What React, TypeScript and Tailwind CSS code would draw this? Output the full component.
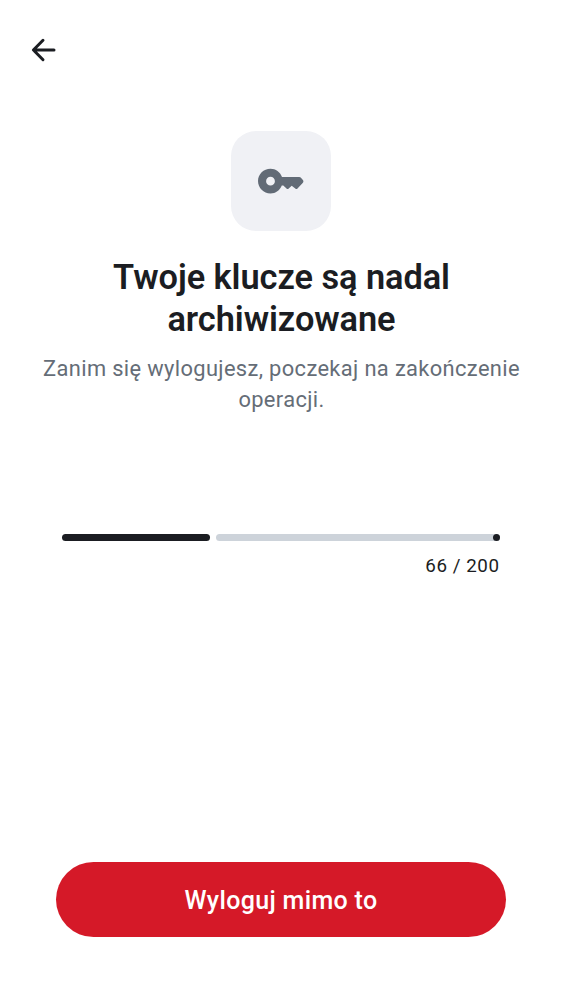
import React from "react";

function BackArrow() {
  return (
    <svg viewBox="0 0 38 38" className="h-[38px] w-[38px] fill-none stroke-[#1b1d22] stroke-[3] [stroke-linecap:round] [stroke-linejoin:round]" aria-hidden="true">
      <path d="M19 9.3 9.4 19l9.6 9.7M9.6 19h20.4" />
    </svg>
  );
}

function KeyIcon() {
  return (
    <svg viewBox="0 0 50 50" className="h-[50px] w-[50px] fill-[#626b76]" aria-hidden="true">
      <path
        fillRule="evenodd"
        d="M14.5 12.8c5.2 0 9.6 3.3 11.5 8.2h17.2c.6 0 1.1.2 1.5.6l2.2 2.5c.7.9.7 1.8 0 2.6l-5.4 5.8c-.7.7-1.5.7-2.2 0l-3.6-2.8-3 2.8c-.7.7-1.5.7-2.2 0l-3.2-2.9-1.5-.1c-2 4.8-6.1 8-11.3 8C7.6 37.5 2 32 2 25.1S7.6 12.8 14.5 12.8m0 8a4.4 4.4 0 1 0 0 8.8 4.4 4.4 0 0 0 0-8.8"
      />
    </svg>
  );
}

export default function App() {
  const done = 66;
  const total = 200;
  return (
    <main className="flex h-[1000px] w-full flex-col bg-white font-['Roboto',sans-serif] text-[#1b1d22]">
      <header className="flex h-[100px] items-center pl-6">
        <button aria-label="Wstecz"><BackArrow /></button>
      </header>
      <section className="flex flex-col items-center pt-[31px] text-center">
        <div className="flex h-[100px] w-[100px] items-center justify-center rounded-[25px] bg-[#f0f1f5]">
          <KeyIcon />
        </div>
        <h1 className="mt-[25px] pl-px text-[34.375px] leading-[42px] font-semibold tracking-[-0.06px]">
          Twoje klucze są nadal<br />archiwizowane
        </h1>
        <p className="mt-[13px] pl-px text-[21.875px] leading-[31.25px] tracking-[0.36px] text-[#656d77]">
          Zanim się wylogujesz, poczekaj na zakończenie<br />operacji.
        </p>
      </section>
      <section className="mt-[118.5px] px-[62px]">
        <div className="flex h-[7px] w-full gap-[6px]">
          <div className="rounded-full bg-[#1b1d22]" style={{ width: 148 }} />
          <div className="flex flex-1 justify-end rounded-full bg-[#cdd3da]">
            <span className="h-[7px] w-[7px] rounded-full bg-[#1b1d22]" />
          </div>
        </div>
        <p className="mt-[11px] pr-[0.5px] text-right text-[18.75px] leading-[28px] tracking-[0.55px]">{done} / {total}</p>
      </section>
      <footer className="mt-auto px-14 pb-[63px]">
        <button className="h-[75px] w-full rounded-full bg-[#d51928] pt-[2px] text-[25px] leading-[37px] font-medium tracking-[0.34px] text-white">
          Wyloguj mimo to
        </button>
      </footer>
    </main>
  );
}
